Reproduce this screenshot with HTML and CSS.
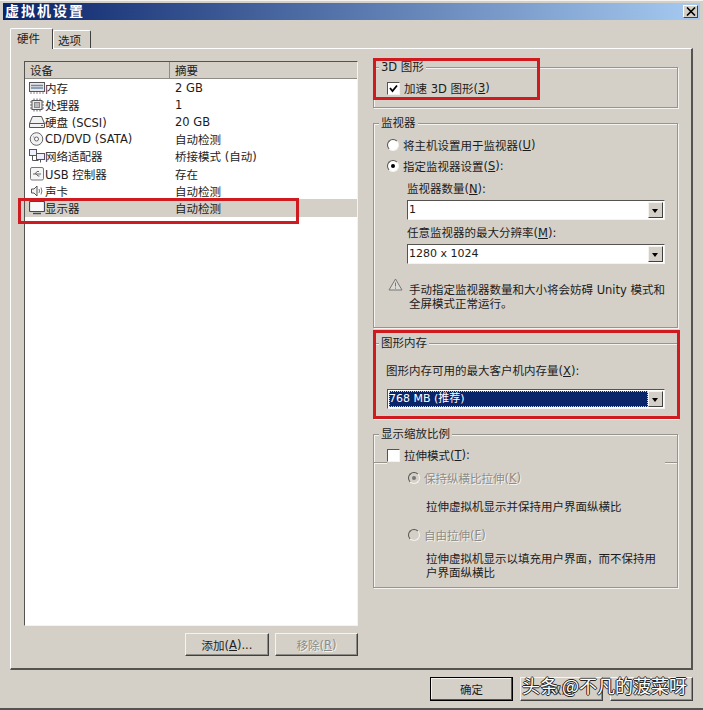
FILE: index.html

```html
<!DOCTYPE html>
<html lang="zh-CN">
<head>
    <meta charset="UTF-8">
    <title>虚拟机设置</title>
    <link rel="stylesheet" href="styles.css">
</head>
<body>
    <div class="window">
        <div class="titlebar">
            <span class="title">虚拟机设置</span>
            <span class="close">
                <svg width="10" height="9" viewBox="0 0 10 9"><path d="M1 0.5 L9 8.5 M9 0.5 L1 8.5" stroke="#000" stroke-width="1.6" fill="none"/></svg>
            </span>
        </div>

        <div class="tabs">
            <div class="tab active">硬件</div>
            <div class="tab">选项</div>
        </div>

        <div class="panel">
            <div class="left">
                <div class="list">
                    <div class="list-head">
                        <div class="col-a">设备</div>
                        <div class="col-b">摘要</div>
                    </div>
                    <div class="row">
                        <div class="col-a">
                            <svg class="icon" viewBox="0 0 16 14"><rect x="0.5" y="1.5" width="15" height="9" fill="#e8e8e8" stroke="#555"/><path d="M2 4.500h12M2 7h12" stroke="#6d86a8" stroke-width="1.400"/><path d="M2 11v2M5 11v2M8 11v2M11 11v2M14 11v2" stroke="#888"/></svg>
                            内存
                        </div>
                        <div class="col-b">2 GB</div>
                    </div>
                    <div class="row">
                        <div class="col-a">
                            <svg class="icon" viewBox="0 0 16 14"><rect x="3" y="2.500" width="10" height="9" fill="#eee" stroke="#555"/><rect x="5.500" y="4.500" width="5" height="5" fill="#bbb" stroke="#888"/><path d="M1 4h2M1 7h2M1 10h2M13 4h2M13 7h2M13 10h2M5 0.500v2M8 0.500v2M11 0.500v2M5 11.500v2M8 11.500v2M11 11.500v2" stroke="#666"/></svg>
                            处理器
                        </div>
                        <div class="col-b">1</div>
                    </div>
                    <div class="row">
                        <div class="col-a">
                            <svg class="icon" viewBox="0 0 16 14"><path d="M3.500 1.500h9l3 7v4h-15v-4z" fill="#f2f2f2" stroke="#555"/><path d="M0.500 8.500h15" stroke="#555"/><path d="M12 10.500h2" stroke="#777"/></svg>
                            硬盘 (SCSI)
                        </div>
                        <div class="col-b">20 GB</div>
                    </div>
                    <div class="row">
                        <div class="col-a">
                            <svg class="icon" viewBox="0 0 16 14"><circle cx="7.500" cy="7" r="6.300" fill="#f2f2f2" stroke="#666"/><circle cx="7.500" cy="7" r="2" fill="#fff" stroke="#666"/><path d="M4 4.500l2 1.300" stroke="#aaa"/></svg>
                            CD/DVD (SATA)
                        </div>
                        <div class="col-b">自动检测</div>
                    </div>
                    <div class="row">
                        <div class="col-a">
                            <svg class="icon" viewBox="0 0 16 14"><rect x="0.500" y="0.500" width="7" height="6" fill="#eef" stroke="#555"/><rect x="7.500" y="4.500" width="8" height="6" fill="#eef" stroke="#555"/><path d="M3.500 6.500v5h6M11.500 10.500v3" stroke="#555" fill="none"/></svg>
                            网络适配器
                        </div>
                        <div class="col-b">桥接模式 (自动)</div>
                    </div>
                    <div class="row">
                        <div class="col-a">
                            <svg class="icon" viewBox="0 0 16 14"><rect x="1.500" y="0.500" width="13" height="12.500" rx="1.500" fill="#f6f6f6" stroke="#777"/><path d="M4 7h8M6 7l2-2.500h2M7 7l2 2h1.500" stroke="#666" fill="none"/></svg>
                            USB 控制器
                        </div>
                        <div class="col-b">存在</div>
                    </div>
                    <div class="row">
                        <div class="col-a">
                            <svg class="icon" viewBox="0 0 16 14"><path d="M2.500 5h2.500l3-3v10l-3-3h-2.500z" fill="#f2f2f2" stroke="#555"/><path d="M10 5q1 2 0 4M12 3.500q1.800 3.500 0 7" stroke="#777" fill="none"/></svg>
                            声卡
                        </div>
                        <div class="col-b">自动检测</div>
                    </div>
                    <div class="row selected">
                        <div class="col-a">
                            <svg class="icon" viewBox="0 0 16 14"><rect x="0.500" y="0.500" width="15" height="10" rx="1" fill="#f8f8f8" stroke="#3c4a60" stroke-width="1.200"/><path d="M4 12.500h8" stroke="#3c4a60" stroke-width="1.400"/></svg>
                            显示器
                        </div>
                        <div class="col-b">自动检测</div>
                    </div>
                </div>
                <div class="list-buttons">
                    <div class="btn btn-add">添加(<u>A</u>)...</div>
                    <div class="btn btn-remove disabled">移除(<u>R</u>)</div>
                </div>
            </div>

            <div class="right">
                <fieldset class="group group-3d">
                    <legend>3D 图形</legend>
                    <div class="group-body">
                        <div class="option">
                            <span class="checkbox">
                                <svg width="9" height="9" viewBox="0 0 9 9"><path d="M1 4l2.500 3L8 1.500" stroke="#000" stroke-width="1.800" fill="none"/></svg>
                            </span>
                            加速 3D 图形(<u>3</u>)
                        </div>
                    </div>
                </fieldset>

                <fieldset class="group group-monitor">
                    <legend>监视器</legend>
                    <div class="group-body">
                        <div class="option"><span class="radio"></span>将主机设置用于监视器(<u>U</u>)</div>
                        <div class="option option-next"><span class="radio on"></span>指定监视器设置(<u>S</u>):</div>
                        <div class="sub">
                            <div class="field-label">监视器数量(<u>N</u>):</div>
                            <div class="combo"><span class="combo-value">1</span><span class="combo-arrow"></span></div>
                            <div class="field-label field-label-next">任意监视器的最大分辨率(<u>M</u>):</div>
                            <div class="combo"><span class="combo-value">1280 x 1024</span><span class="combo-arrow"></span></div>
                        </div>
                        <div class="warning">
                            <svg class="warning-icon" width="15" height="13" viewBox="0 0 15 13"><path d="M7.500 1L14 12H1z" fill="#dedbd4" stroke="#777"/><path d="M7.500 4.500v4M7.500 9.500v1.200" stroke="#777"/></svg>
                            <p>手动指定监视器数量和大小将会妨碍 Unity 模式和全屏模式正常运行。</p>
                        </div>
                    </div>
                </fieldset>

                <fieldset class="group group-memory">
                    <legend>图形内存</legend>
                    <div class="group-body">
                        <div class="memory-label">图形内存可用的最大客户机内存量(<u>X</u>):</div>
                        <div class="combo combo-memory"><span class="combo-value picked">768 MB (推荐)</span><span class="combo-arrow"></span></div>
                    </div>
                </fieldset>

                <fieldset class="group group-scale">
                    <legend>显示缩放比例</legend>
                    <div class="stretch-head">
                        <span class="rule rule-left"></span>
                        <div class="option"><span class="checkbox"></span>拉伸模式(<u>T</u>):</div>
                        <span class="rule rule-right"></span>
                    </div>
                    <div class="stretch-body">
                        <div class="option muted"><span class="radio on off"></span>保持纵横比拉伸(<u>K</u>)</div>
                        <p class="desc desc-keep">拉伸虚拟机显示并保持用户界面纵横比</p>
                        <div class="option muted option-free"><span class="radio off"></span>自由拉伸(<u>F</u>)</div>
                        <p class="desc desc-free">拉伸虚拟机显示以填充用户界面，而不保持用户界面纵横比</p>
                    </div>
                </fieldset>
            </div>
        </div>

        <div class="footer">
            <div class="btn btn-foot btn-default">确定</div>
            <div class="btn btn-foot">取消</div>
            <div class="btn btn-foot"></div>
        </div>

        <!-- annotations on top of the screenshot -->
        <div class="mark mark-display"></div>
        <div class="mark mark-3d"></div>
        <div class="mark mark-memory"></div>
        <div class="watermark">头条 @不凡的菠菜呀</div>
    </div>
</body>
</html>
```

FILE: styles.css

```css
* {
    box-sizing: border-box;
}

body {
    margin: 0;
    background: #d4d0c8;
    font-family: "DejaVu Sans", "Noto Sans CJK SC", sans-serif;
    font-size: 11.5px;
    color: #1c1c1c;
}

.window {
    position: relative;
    width: 703px;
    height: 710px;
    padding: 2px 3px 0;
    background: #d4d0c8;
    border-top: 1px solid #f4f3ef;
    border-bottom: 2px solid #55534f;
    overflow: hidden;
}

.titlebar {
    display: flex;
    justify-content: space-between;
    align-items: center;
    height: 17px;
    padding: 0 2px;
    background: linear-gradient(to right, #0a246a, #a6caf0);
}

.title {
    padding-bottom: 2px;
    color: #fff;
    font-size: 14px;
    font-weight: bold;
    line-height: 1;
    letter-spacing: 2px;
}

.close {
    display: flex;
    justify-content: center;
    align-items: center;
    width: 15px;
    height: 13px;
    background: #d4d0c8;
    border: 1px solid;
    border-color: #fff #404040 #404040 #fff;
}

.tabs {
    display: flex;
    align-items: flex-end;
    height: 20px;
    margin: 8px 0 0 7px;
}

.tab {
    display: flex;
    align-items: center;
    width: 38px;
    height: 18px;
    padding-left: 4px;
    border: 1px solid;
    border-color: #fff #404040 transparent #fff;
    border-bottom: 0;
    border-radius: 2px 2px 0 0;
}

.tab.active {
    width: 43px;
    height: 21px;
    margin-bottom: -1px;
    padding: 0 0 2px 6px;
    background: #d4d0c8;
    position: relative;
}

.panel {
    display: flex;
    height: 622px;
    margin: 0 7px;
    padding: 10px 0 0 13px;
    border: 1px solid;
    border-color: #fff #55534f #55534f #fff;
    border-right-width: 2px;
    border-bottom-width: 2px;
}

.left {
    width: 334px;
    margin-right: 15px;
    padding-top: 2px;
}

.list {
    height: 565px;
    background: #fff;
    border: 1px solid;
    border-color: #55534f #f4f3ef #f4f3ef #55534f;
}

.list-head,
.row {
    display: flex;
    height: 17.2px;
    align-items: center;
}

.list-head {
    height: 17px;
    background: #d4d0c8;
    border-bottom: 1px solid #8e8c86;
}

.list-head .col-a {
    height: 100%;
    padding-left: 5px;
    border-right: 1px solid #8e8c86;
}

.col-a {
    display: flex;
    align-items: center;
    width: 145px;
    padding-left: 4px;
    white-space: nowrap;
}

.col-b {
    padding-left: 5px;
}

.selected {
    background: #d4d0c8;
}

.icon {
    width: 16px;
    height: 14px;
    flex: none;
}

.list-buttons {
    display: flex;
    justify-content: flex-end;
    gap: 6px;
    margin-top: 7px;
}

.btn {
    display: flex;
    justify-content: center;
    align-items: center;
    height: 23px;
    background: #d4d0c8;
    border: 1px solid;
    border-color: #f4f3ef #404040 #404040 #f4f3ef;
    box-shadow: inset -1px -1px 0 #8e8c86;
}

.btn-add {
    width: 84px;
}

.btn-remove {
    width: 83px;
}

.disabled {
    color: #8e8c86;
    text-shadow: 1px 1px 0 #f4f3ef;
}

.right {
    display: flex;
    flex-direction: column;
    gap: 7px;
    width: 305px;
}

.group {
    margin: 0;
    padding: 0;
    min-width: 0;
    border: 1px solid #96948e;
    box-shadow: 1px 1px 0 #f4f3ef, inset 1px 1px 0 #f4f3ef;
}

.group legend {
    margin-left: 5px;
    padding: 0 2px;
    height: 16px;
    line-height: 16px;
    background: #d4d0c8;
}

.group-3d {
    height: 49px;
}

.group-3d .group-body {
    padding: 5px 0 0 13px;
}

.group-monitor {
    height: 213px;
}

.group-monitor .group-body {
    padding: 6px 0 0 13px;
}

.group-memory {
    height: 84px;
}

.group-memory .group-body {
    padding: 12px 0 0 12px;
}

.group-scale {
    height: 162px;
}

.option {
    display: flex;
    align-items: center;
    height: 16px;
    white-space: nowrap;
}

.option-next {
    margin-top: 5px;
}

.checkbox {
    display: flex;
    justify-content: center;
    align-items: center;
    width: 13px;
    height: 13px;
    margin-right: 4px;
    background: #fff;
    border: 1px solid;
    border-color: #55534f #f4f3ef #f4f3ef #55534f;
    flex: none;
}

.radio {
    position: relative;
    width: 12px;
    height: 12px;
    margin-right: 4px;
    background: #fff;
    border: 1px solid;
    border-color: #55534f #f4f3ef #f4f3ef #55534f;
    border-radius: 50%;
    flex: none;
}

.radio.on::after {
    content: "";
    position: absolute;
    left: 3px;
    top: 3px;
    width: 4px;
    height: 4px;
    background: #000;
    border-radius: 50%;
}

.radio.off {
    background: #d4d0c8;
}

.radio.off::after {
    background: #777;
}

.sub {
    padding-left: 20px;
}

.field-label {
    height: 16px;
    margin-top: 7px;
    line-height: 16px;
}

.field-label-next {
    margin-top: 5px;
}

.combo {
    display: flex;
    height: 20px;
    width: 258px;
    margin-top: 3px;
    padding: 1px;
    background: #fff;
    border: 1px solid;
    border-color: #55534f #f4f3ef #f4f3ef #55534f;
}

.combo-value {
    flex: 1;
    font-size: 11px;
    line-height: 16px;
}

.combo-arrow {
    position: relative;
    width: 15px;
    background: #d4d0c8;
    border: 1px solid;
    border-color: #f4f3ef #404040 #404040 #f4f3ef;
}

.combo-arrow::after {
    content: "";
    position: absolute;
    left: 3px;
    top: 6px;
    border: 3.5px solid transparent;
    border-top: 4px solid #000;
    border-bottom: 0;
}

.warning {
    display: flex;
    margin-top: 12px;
    padding-left: 1px;
}

.warning-icon {
    flex: none;
    margin: 2px 6px 0 0;
}

.warning p {
    width: 262px;
    margin: 7px 0 0;
    line-height: 14px;
}

.memory-label {
    height: 16px;
    line-height: 16px;
}

.combo-memory {
    width: 278px;
    margin: 10px 0 0 1px;
}

.picked {
    color: #fff;
    background: #0a246a;
    outline: 1px dotted #d4d0c8;
    outline-offset: -1px;
}

.stretch-head {
    display: flex;
    align-items: flex-end;
    height: 22px;
}

.stretch-head .option {
    flex: 1;
    height: 22px;
    padding-top: 4px;
}

.rule {
    height: 2px;
    border-top: 1px solid #96948e;
    border-bottom: 1px solid #f4f3ef;
}

.rule-left {
    width: 13px;
}

.rule-right {
    width: 12px;
}

.stretch-body {
    padding: 6px 0 0 34px;
}

.muted {
    color: #8e8c86;
    text-shadow: 1px 1px 0 #f4f3ef;
}

.desc {
    margin: 0;
    padding-left: 18px;
    line-height: 14px;
}

.desc-keep {
    margin-top: 14px;
}

.option-free {
    margin-top: 13px;
}

.desc-free {
    margin-top: 9px;
    width: 253px;
}

.footer {
    display: flex;
    justify-content: flex-end;
    gap: 7px;
    margin-top: 7px;
    padding-right: 7px;
}

.btn-foot {
    width: 83px;
    height: 24px;
}

.btn-default {
    border: 1px solid #000;
    box-shadow: inset -1px -1px 0 #55534f, inset 1px 1px 0 #f4f3ef;
}

.mark {
    position: absolute;
    border: 3px solid #cf1a20;
}

.mark-display {
    left: 18px;
    top: 197px;
    width: 281px;
    height: 26px;
}

.mark-3d {
    left: 373px;
    top: 57px;
    width: 167px;
    height: 42px;
}

.mark-memory {
    left: 373px;
    top: 329px;
    width: 307px;
    height: 89px;
}

.watermark {
    position: absolute;
    left: 522px;
    top: 674px;
    color: #fff;
    font-size: 18px;
    line-height: 20px;
    font-family: "Noto Sans CJK SC", sans-serif;
    white-space: nowrap;
    text-shadow: 1px 0 0 #222, -1px 0 0 #222, 0 1px 0 #222, 0 -1px 0 #222;
}
```
